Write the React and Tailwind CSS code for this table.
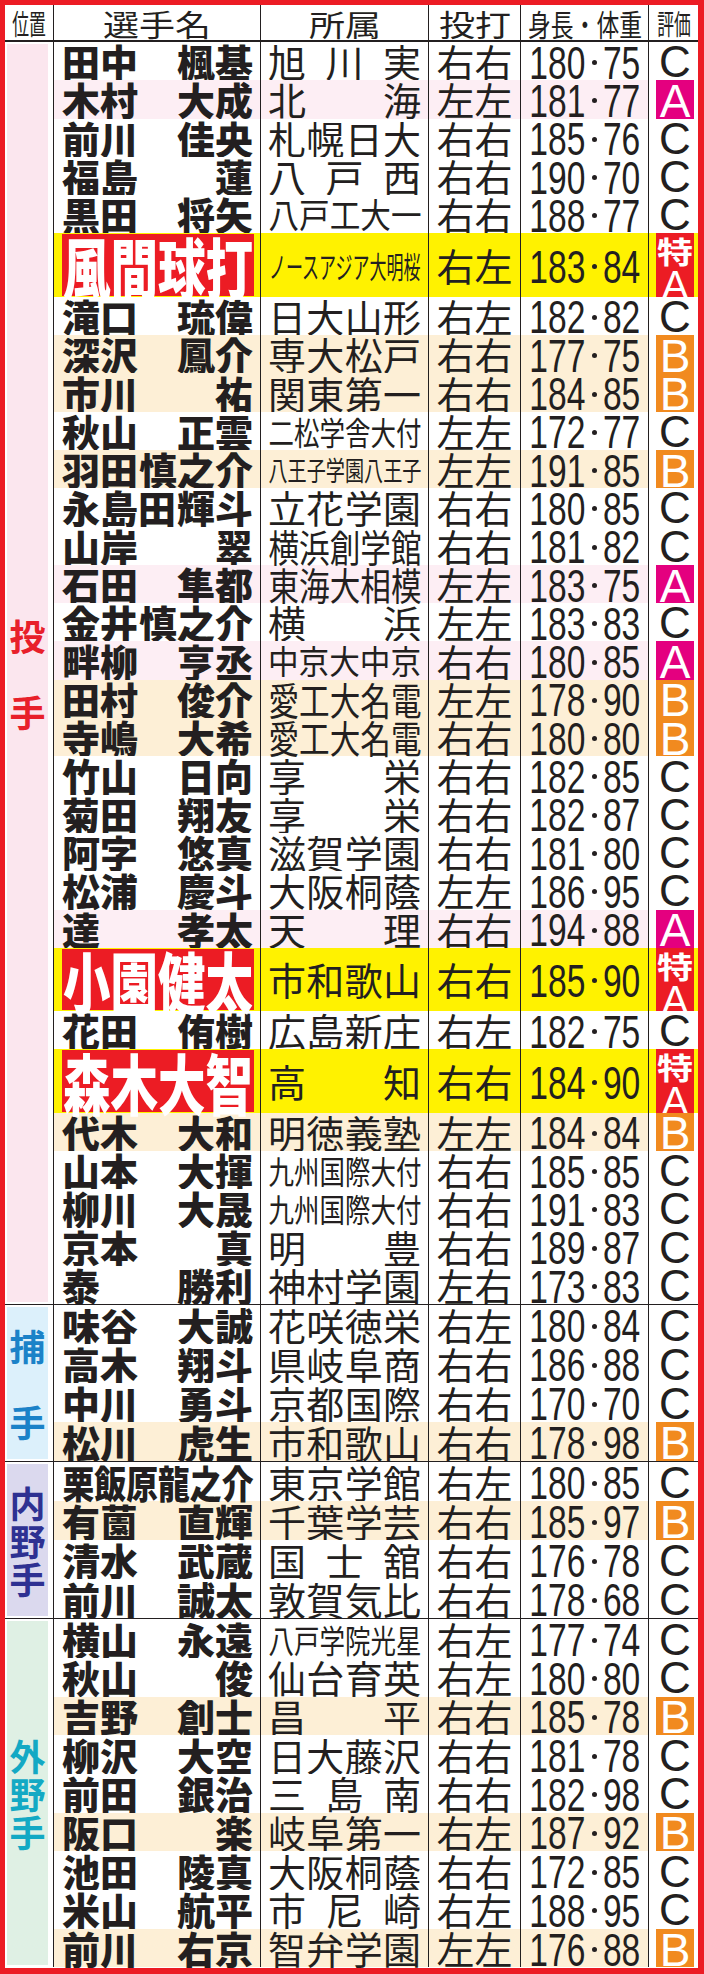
import React from "react";

// [surname, given, school, hand, height, weight, rating]  rating: C / A / B / S(特A)
const pitchers = [
  ["田中", "楓基", "旭川実", "右右", "180", "75", "C"],
  ["木村", "大成", "北海", "左左", "181", "77", "A"],
  ["前川", "佳央", "札幌日大", "右右", "185", "76", "C"],
  ["福島", "蓮", "八戸西", "右右", "190", "70", "C"],
  ["黒田", "将矢", "八戸工大一", "右右", "188", "77", "C"],
  ["風間球打", "", "ノースアジア大明桜", "右左", "183", "84", "S"],
  ["滝口", "琉偉", "日大山形", "右左", "182", "82", "C"],
  ["深沢", "鳳介", "専大松戸", "右右", "177", "75", "B"],
  ["市川", "祐", "関東第一", "右右", "184", "85", "B"],
  ["秋山", "正雲", "二松学舎大付", "左左", "172", "77", "C"],
  ["羽田", "慎之介", "八王子学園八王子", "左左", "191", "85", "B"],
  ["永島田", "輝斗", "立花学園", "右右", "180", "85", "C"],
  ["山岸", "翠", "横浜創学館", "右右", "181", "82", "C"],
  ["石田", "隼都", "東海大相模", "左左", "183", "75", "A"],
  ["金井", "慎之介", "横浜", "左左", "183", "83", "C"],
  ["畔柳", "亨丞", "中京大中京", "右右", "180", "85", "A"],
  ["田村", "俊介", "愛工大名電", "左左", "178", "90", "B"],
  ["寺嶋", "大希", "愛工大名電", "右右", "180", "80", "B"],
  ["竹山", "日向", "享栄", "右右", "182", "85", "C"],
  ["菊田", "翔友", "享栄", "右右", "182", "87", "C"],
  ["阿字", "悠真", "滋賀学園", "右右", "181", "80", "C"],
  ["松浦", "慶斗", "大阪桐蔭", "左左", "186", "95", "C"],
  ["達", "孝太", "天理", "右右", "194", "88", "A"],
  ["小園健太", "", "市和歌山", "右右", "185", "90", "S"],
  ["花田", "侑樹", "広島新庄", "右左", "182", "75", "C"],
  ["森木大智", "", "高知", "右右", "184", "90", "S"],
  ["代木", "大和", "明徳義塾", "左左", "184", "84", "B"],
  ["山本", "大揮", "九州国際大付", "右右", "185", "85", "C"],
  ["柳川", "大晟", "九州国際大付", "右右", "191", "83", "C"],
  ["京本", "真", "明豊", "右右", "189", "87", "C"],
  ["泰", "勝利", "神村学園", "左右", "173", "83", "C"],
];

const catchers = [
  ["味谷", "大誠", "花咲徳栄", "右左", "180", "84", "C"],
  ["高木", "翔斗", "県岐阜商", "右右", "186", "88", "C"],
  ["中川", "勇斗", "京都国際", "右右", "170", "70", "C"],
  ["松川", "虎生", "市和歌山", "右右", "178", "98", "B"],
];

const infielders = [
  ["栗飯原龍之介", "", "東京学館", "右左", "180", "85", "C"],
  ["有薗", "直輝", "千葉学芸", "右右", "185", "97", "B"],
  ["清水", "武蔵", "国士舘", "右右", "176", "78", "C"],
  ["前川", "誠太", "敦賀気比", "右右", "178", "68", "C"],
];

const outfielders = [
  ["横山", "永遠", "八戸学院光星", "右左", "177", "74", "C"],
  ["秋山", "俊", "仙台育英", "右左", "180", "80", "C"],
  ["吉野", "創士", "昌平", "右右", "185", "78", "B"],
  ["柳沢", "大空", "日大藤沢", "右右", "181", "78", "C"],
  ["前田", "銀治", "三島南", "右右", "182", "98", "C"],
  ["阪口", "楽", "岐阜第一", "右左", "187", "92", "B"],
  ["池田", "陵真", "大阪桐蔭", "右右", "172", "85", "C"],
  ["米山", "航平", "市尼崎", "右左", "188", "95", "C"],
  ["前川", "右京", "智弁学園", "左左", "176", "88", "B"],
];

// long school names get a smaller size and are squeezed to the cell
const longSchool = {
  "八戸工大一": ["text-[34px]", 34],
  "ノースアジア大明桜": ["text-[30px]", 30],
  "二松学舎大付": ["text-[32px]", 32],
  "八王子学園八王子": ["text-[27px]", 27],
  "横浜創学館": ["text-[38px]", 38],
  "東海大相模": ["text-[38px]", 38],
  "中京大中京": ["text-[33px]", 33],
  "愛工大名電": ["text-[38px]", 38],
  "九州国際大付": ["text-[32px]", 32],
  "八戸学院光星": ["text-[32px]", 32],
};

const rowBg = {
  C: "bg-white",
  A: "bg-[#fdeef4]",
  B: "bg-[#fdefd6]",
  S: "bg-[#fff200]",
};

const NameCell = ({ sur, given, big }) => {
  if (big) {
    return (
      <div className="w-[207px] border-l border-[#231f20] pl-[8px] pr-[6px] py-[1px]">
        <div className="h-full bg-[#ec1c24] flex items-center justify-center">
          <span className="inline-block whitespace-nowrap scale-x-[0.72] text-white font-black text-[66px] leading-none">
            {sur}
          </span>
        </div>
      </div>
    );
  }
  if (!given) {
    const n = [...sur].length;
    return (
      <div className="w-[207px] border-l border-[#231f20] pl-[8px] pr-[7px] flex items-center justify-center">
        <span
          className="inline-block whitespace-nowrap font-black text-[38px] leading-none"
          style={{ transform: `scaleX(${Math.min(1, 191 / (n * 38))})` }}
        >
          {sur}
        </span>
      </div>
    );
  }
  return (
    <div className="w-[207px] border-l border-[#231f20] pl-[8px] pr-[7px] flex items-center justify-between font-black text-[38px] leading-none">
      <span className="whitespace-nowrap">{sur}</span>
      <span className="whitespace-nowrap">{given}</span>
    </div>
  );
};

const SchoolCell = ({ name }) => {
  const chars = [...name];
  if (chars.length <= 4) {
    return (
      <div className="w-[168px] border-l border-[#231f20] px-[7px] flex items-center justify-between text-[38px] leading-none">
        {chars.map((c, i) => (
          <span key={i}>{c}</span>
        ))}
      </div>
    );
  }
  const [cls, px] = longSchool[name] || ["text-[32px]", 32];
  return (
    <div className="w-[168px] border-l border-[#231f20] flex items-center justify-center">
      <span
        className={`inline-block whitespace-nowrap leading-none ${cls}`}
        style={{ transform: `scaleX(${153 / (chars.length * px)})` }}
      >
        {name}
      </span>
    </div>
  );
};

const HeightCell = ({ ht, wt }) => (
  <div className="w-[128px] border-l border-[#231f20] flex items-center justify-center pt-[3px] font-['Liberation_Sans',sans-serif] text-[46px] leading-none">
    <span className="w-[56px] flex justify-center">
      <span className="inline-block whitespace-nowrap scale-x-[0.73]">{ht}</span>
    </span>
    <span className="w-[5px] h-[5px] rounded-full bg-[#231f20] ml-[7px] mr-[6px]" />
    <span className="w-[37px] flex justify-center">
      <span className="inline-block whitespace-nowrap scale-x-[0.73]">{wt}</span>
    </span>
  </div>
);

const RatingCell = ({ rate }) => (
  <div
    className={`w-[50px] border-l border-[#231f20] pl-[7px] pr-[4px] font-['Liberation_Sans',sans-serif] leading-none ${
      rate === "S" ? "bg-[#fff200]" : "bg-white"
    }`}
  >
    {rate === "C" && (
      <div className="h-full flex items-center justify-center text-[44px] pt-[2px]">C</div>
    )}
    {rate === "A" && (
      <div className="h-full bg-[#e4007f] text-white flex items-center justify-center text-[46px] pt-[3px]">
        A
      </div>
    )}
    {rate === "B" && (
      <div className="h-full bg-[#f18a1f] text-white flex items-center justify-center text-[46px] pt-[3px]">
        B
      </div>
    )}
    {rate === "S" && (
      <div className="h-full bg-[#ec1c24] text-white flex flex-col items-center justify-between pt-[2px] pb-[1px]">
        <span className="inline-block scale-x-[1.2] font-['Noto_Sans_CJK_JP',sans-serif] font-bold text-[30px] leading-none">
          特
        </span>
        <span className="text-[40px] leading-none">A</span>
      </div>
    )}
  </div>
);

const Row = ({ p, h, bigH }) => {
  const [sur, given, school, hand, ht, wt, rate] = p;
  const big = rate === "S";
  return (
    <div className={`flex ${big ? bigH : h} ${rowBg[rate]}`}>
      <NameCell sur={sur} given={given} big={big} />
      <SchoolCell name={school} />
      <div className="w-[92px] border-l border-[#231f20] flex items-center justify-center text-[38px] leading-none">
        {hand}
      </div>
      <HeightCell ht={ht} wt={wt} />
      <RatingCell rate={rate} />
    </div>
  );
};

const Section = ({ label, gap, box, color, rows, h, bigH, first }) => (
  <div className={`flex ${first ? "" : "border-t border-[#231f20]"}`}>
    <div className="w-[48px] pl-[2px] pr-[5px] py-[2px] flex">
      <div className={`flex-1 flex flex-col items-center justify-center font-bold text-[36px] leading-none ${box} ${color} ${gap}`}>
        {[...label].map((c, i) => (
          <span key={i}>{c}</span>
        ))}
      </div>
    </div>
    <div className="flex flex-col">
      {rows.map((p, i) => (
        <Row key={i} p={p} h={h} bigH={bigH} />
      ))}
    </div>
  </div>
);

const App = () => {
  return (
    <div className="w-[704px] h-[1974px] overflow-hidden bg-white border-l-[5px] border-t-[5px] border-r-[6px] border-b-[6px] border-[#ec1c24] font-['Noto_Sans_CJK_JP',sans-serif] text-[#231f20]">
      {/* header */}
      <div className="flex h-[37px] border-b-2 border-[#231f20] text-[30px] leading-none whitespace-nowrap">
        <div className="w-[48px] flex items-center justify-center">
          <span className="inline-block scale-x-[0.6] text-[28px]">位置</span>
        </div>
        <div className="w-[207px] border-l border-[#231f20] flex items-center justify-center">
          <span className="inline-block scale-x-[1.2]">選手名</span>
        </div>
        <div className="w-[168px] border-l border-[#231f20] flex items-center justify-center">
          <span className="inline-block scale-x-[1.2]">所属</span>
        </div>
        <div className="w-[92px] border-l border-[#231f20] flex items-center justify-center">
          <span className="inline-block scale-x-[1.2]">投打</span>
        </div>
        <div className="w-[128px] border-l border-[#231f20] flex items-center justify-center">
          <span className="inline-block scale-x-[0.76]">身長・体重</span>
        </div>
        <div className="w-[50px] border-l border-[#231f20] flex items-center justify-center">
          <span className="inline-block scale-x-[0.6] text-[28px]">評価</span>
        </div>
      </div>

      <Section
        first
        label="投手"
        gap="gap-[40px]"
        box="bg-[#fbe6ee]"
        color="text-[#e8202a]"
        rows={pitchers}
        h="h-[38.3px]"
        bigH="h-[63.3px]"
      />
      <Section
        label="捕手"
        gap="gap-[40px]"
        box="bg-[#dcf0fb]"
        color="text-[#1b82c8]"
        rows={catchers}
        h="h-[39px]"
        bigH="h-[63px]"
      />
      <Section
        label="内野手"
        gap="gap-[2px]"
        box="bg-[#dbd9ee]"
        color="text-[#2e3192]"
        rows={infielders}
        h="h-[39px]"
        bigH="h-[63px]"
      />
      <Section
        label="外野手"
        gap="gap-[2px]"
        box="bg-[#dff0e4]"
        color="text-[#13a9c4]"
        rows={outfielders}
        h="h-[38.7px]"
        bigH="h-[63px]"
      />
    </div>
  );
};

export default App;
